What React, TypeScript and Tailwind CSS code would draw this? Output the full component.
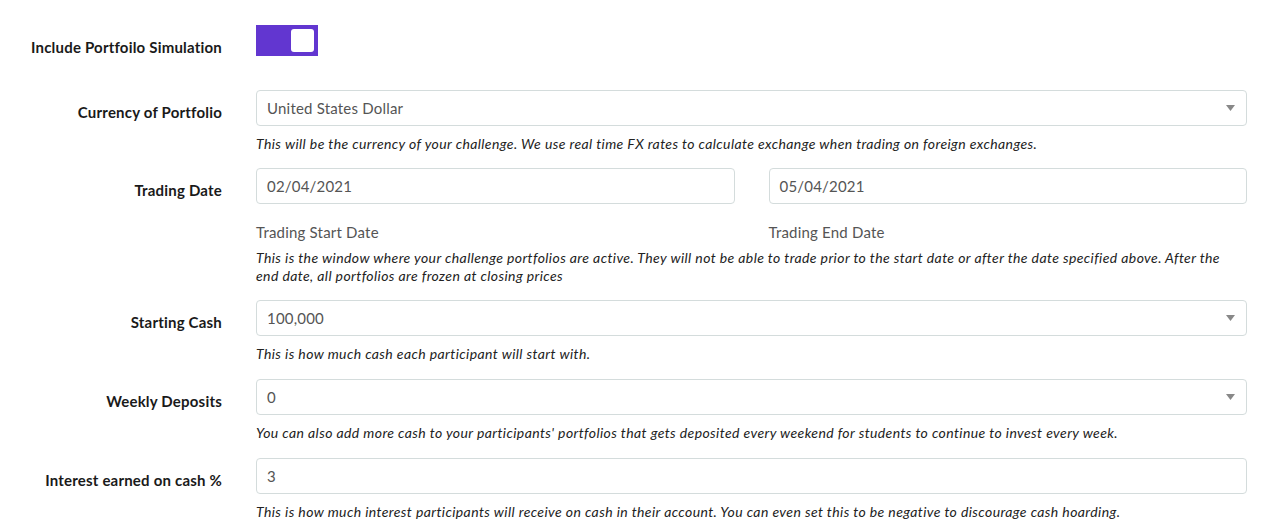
import React from "react";

const font = { fontFamily: "Lato, 'Noto Sans', sans-serif" };

function Caret() {
  return (
    <svg width="9" height="6" viewBox="0 0 9 6" className="absolute right-[11px] top-[14px]">
      <polygon points="0,0 9,0 4.5,6" fill="#888888" />
    </svg>
  );
}

function Field({ value, select }: { value: string; select?: boolean }) {
  return (
    <div className="relative h-[36px] w-full rounded-[4px] border border-[#d4dcdc] bg-white pl-[10px] text-[15px] leading-[34px] tracking-[0.2px] text-[#555555]">
      {value}
      {select && <Caret />}
    </div>
  );
}

function Help({ children }: { children: React.ReactNode }) {
  return <p className="mt-[9px] text-[14px] italic leading-[18px] tracking-[0.4px] text-[#222222]">{children}</p>;
}

function Row({ label, children, className }: { label: string; children: React.ReactNode; className?: string }) {
  return (
    <div className={"flex gap-[34px] " + (className ?? "")}>
      <div className="w-[222px] shrink-0 pt-[12px] text-right text-[15px] font-bold leading-[20px] tracking-[0.2px] text-[#1a1a1a]">{label}</div>
      <div className="min-w-0 flex-1">{children}</div>
    </div>
  );
}

export default function App() {
  return (
    <div style={font} className="min-h-[531px] w-[1265px] bg-white pr-[18px] pt-[25px]">
      <Row label="Include Portfoilo Simulation" className="mb-[33px]">
        <div className="flex h-[31px] w-[62px] items-center justify-end bg-[#6236d0] pr-[4px]">
          <div className="h-[23px] w-[23px] rounded-[3px] bg-white" />
        </div>
      </Row>

      <Row label="Currency of Portfolio" className="mb-[15px]">
        <Field value="United States Dollar" select />
        <Help>This will be the currency of your challenge. We use real time FX rates to calculate exchange when trading on foreign exchanges.</Help>
      </Row>

      <Row label="Trading Date" className="mb-[15px]">
        <div className="grid grid-cols-2 gap-[34px]">
          <div>
            <Field value="02/04/2021" />
            <div className="mt-[18px] text-[15px] leading-[20px] tracking-[0.2px] text-[#555555]">Trading Start Date</div>
          </div>
          <div>
            <Field value="05/04/2021" />
            <div className="mt-[18px] text-[15px] leading-[20px] tracking-[0.2px] text-[#555555]">Trading End Date</div>
          </div>
        </div>
        <p className="mt-[7px] pr-[20px] text-[14px] italic leading-[18px] tracking-[0.4px] text-[#222222]">
          This is the window where your challenge portfolios are active. They will not be able to trade prior to the start date or after the date specified above. After the end date, all portfolios are frozen at closing prices
        </p>
      </Row>

      <Row label="Starting Cash" className="mb-[16px]">
        <Field value="100,000" select />
        <Help>This is how much cash each participant will start with.</Help>
      </Row>

      <Row label="Weekly Deposits" className="mb-[16px]">
        <Field value="0" select />
        <Help>You can also add more cash to your participants' portfolios that gets deposited every weekend for students to continue to invest every week.</Help>
      </Row>

      <Row label="Interest earned on cash %">
        <Field value="3" />
        <Help>This is how much interest participants will receive on cash in their account. You can even set this to be negative to discourage cash hoarding.</Help>
      </Row>
    </div>
  );
}
